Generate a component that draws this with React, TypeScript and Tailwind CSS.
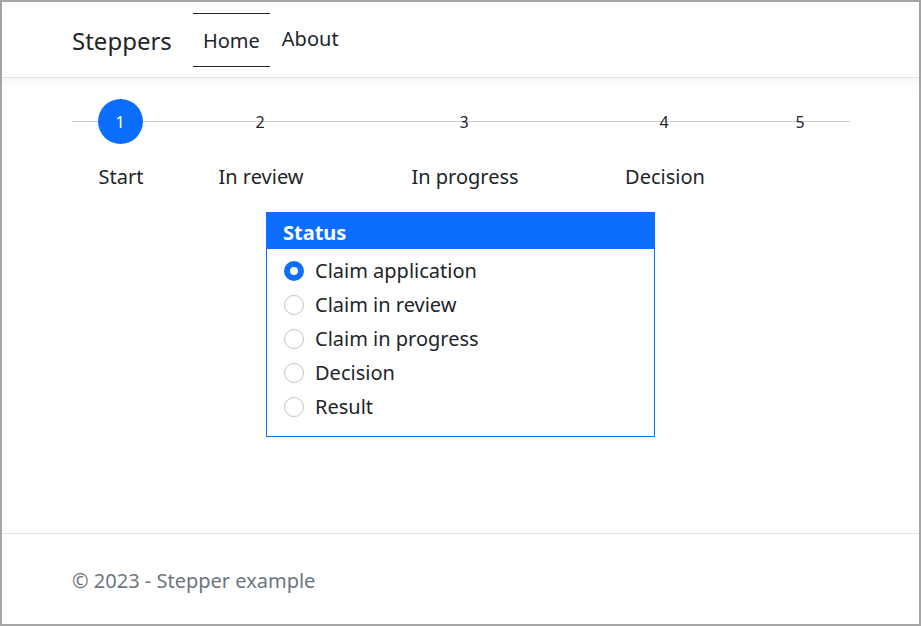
import React from 'react';

const steps = [
  { n: 1, label: 'Start', gap: 'ml-0' },
  { n: 2, label: 'In review', gap: 'ml-[44px]' },
  { n: 3, label: 'In progress', gap: 'ml-[108px]' },
  { n: 4, label: 'Decision', gap: 'ml-[104px]' },
  { n: 5, label: '', gap: 'ml-[40px]' },
];

const statuses = ['Claim application', 'Claim in review', 'Claim in progress', 'Decision', 'Result'];

export default function App() {
  const current = 0;

  return (
    <div
      className="flex h-[626px] w-[921px] flex-col border-2 border-[#a6a6a6] bg-white text-[#212529]"
      style={{ fontFamily: '"Noto Sans", "Open Sans", sans-serif' }}
    >
      {/* navbar */}
      <header className="relative z-10 flex h-[76px] items-center border-b border-[#dee2e6] bg-white pl-[70px] shadow-[0_4px_12px_rgba(0,0,0,0.05)]">
        <span className="mr-[21px] pt-[2px] text-[24px] leading-none">Steppers</span>
        <nav className="flex items-center">
          <a className="flex h-[54px] w-[77px] items-center justify-center border-y border-[#212529] pt-[2px] text-[20px]">Home</a>
          <a className="ml-[12px] pb-[2px] text-[20px] leading-none">About</a>
        </nav>
      </header>

      {/* main */}
      <main className="flex-1 pl-[70px] pr-[69px] pt-[21px]">
        <div className="relative flex">
          <div className="absolute left-0 right-0 top-[22px] h-px bg-[#cccccc]" />
          {steps.map((s, i) => (
            <div key={s.n} className={`relative flex w-24 flex-col items-center ${s.gap}`}>
              <div
                className={
                  i === current
                    ? 'flex h-[45px] w-[45px] items-center justify-center rounded-full bg-[#0d6efd] text-[16px] text-white'
                    : 'flex h-[45px] w-[45px] items-center justify-center text-[16px]'
                }
              >
                {s.n}
              </div>
              <div className="mt-[18px] h-[30px] whitespace-nowrap pl-[2px] text-[20px] leading-[30px]">{s.label}</div>
            </div>
          ))}
        </div>

        <div className="ml-[194px] mt-[20px] w-[389px] border border-[color:#0d6efd]">
          <div className="flex h-[36px] items-center bg-[#0d6efd] px-4 pt-[4px] text-[20px] font-bold text-white">Status</div>
          <div className="pb-[12px] pl-[17px] pt-[5px]">
            {statuses.map((s, i) => (
              <label key={s} className="flex h-[34px] items-center">
                <span
                  className={
                    i === current
                      ? 'flex h-5 w-5 items-center justify-center rounded-full bg-[#0d6efd]'
                      : 'h-5 w-5 rounded-full border border-[#c4c4c4] bg-white'
                  }
                >
                  {i === current && <span className="h-2 w-2 rounded-full bg-white" />}
                </span>
                <span className="ml-[11px] text-[20px]">{s}</span>
              </label>
            ))}
          </div>
        </div>
      </main>

      {/* footer */}
      <footer className="flex h-[91px] items-center border-t border-[#dee2e6] pl-[70px] pt-[4px] text-[20px] text-[#6c757d]">
        © 2023 - Stepper example
      </footer>
    </div>
  );
}
